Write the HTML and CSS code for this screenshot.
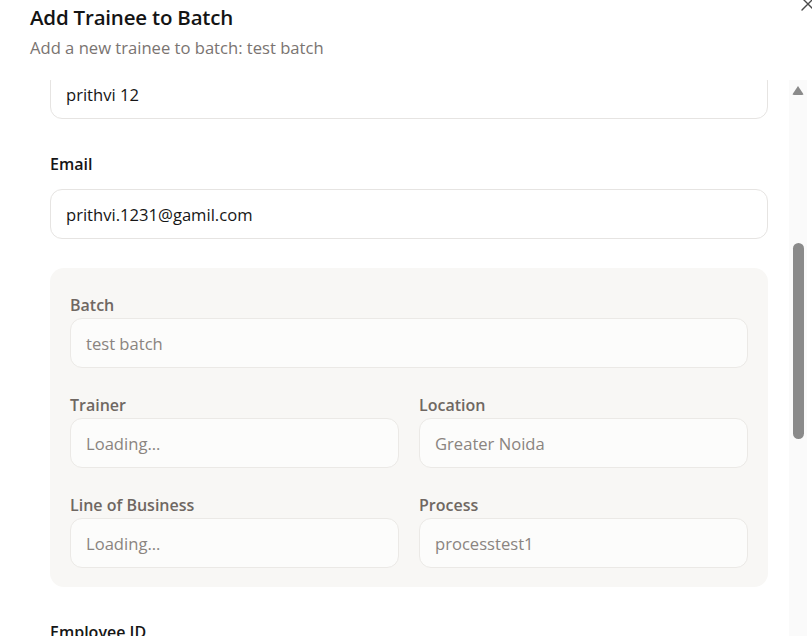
FILE: index.html
```html
<!DOCTYPE html>
<html lang="en">
<head>
<meta charset="utf-8">
<title>Add Trainee to Batch</title>
<link rel="stylesheet" href="styles.css">
</head>
<body>
<div class="dialog">
  <button class="close" aria-label="Close">
    <svg width="16" height="16" viewBox="0 0 16 16"><path d="M2 2 L14 14 M14 2 L2 14" stroke="#4a4a4a" stroke-width="1.4" fill="none" stroke-linecap="round"/></svg>
  </button>
  <header class="header">
    <h2 class="title">Add Trainee to Batch</h2>
    <p class="subtitle">Add a new trainee to batch: test batch</p>
  </header>
  <div class="body">
    <div class="viewport">
      <form class="form">
        <div class="field">
          <div class="input">prithvi 12</div>
        </div>
        <div class="field">
          <label class="label">Email</label>
          <div class="input">prithvi.1231@gamil.com</div>
        </div>
        <div class="panel">
          <div class="pfield">
            <label class="plabel">Batch</label>
            <div class="pinput">test batch</div>
          </div>
          <div class="prow">
            <div class="pfield">
              <label class="plabel">Trainer</label>
              <div class="pinput">Loading...</div>
            </div>
            <div class="pfield">
              <label class="plabel">Location</label>
              <div class="pinput">Greater Noida</div>
            </div>
          </div>
          <div class="prow">
            <div class="pfield">
              <label class="plabel">Line of Business</label>
              <div class="pinput">Loading...</div>
            </div>
            <div class="pfield">
              <label class="plabel">Process</label>
              <div class="pinput">processtest1</div>
            </div>
          </div>
        </div>
        <div class="field">
          <label class="label">Employee ID</label>
          <div class="input"></div>
        </div>
      </form>
    </div>
    <div class="scrollbar">
      <div class="arrow"></div>
      <div class="thumb"></div>
    </div>
  </div>
</div>
</body>
</html>
```
FILE: styles.css
```css
* { box-sizing: border-box; }
html, body { margin: 0; padding: 0; background: #fff; }
body {
  font-family: "Open Sans", "Noto Sans", sans-serif;
  color: #111;
  width: 812px;
  height: 636px;
  overflow: hidden;
}
.dialog {
  position: relative;
  width: 812px;
  height: 636px;
  display: flex;
  flex-direction: column;
}
.close {
  position: absolute;
  top: -4px;
  left: 800px;
  width: 16px;
  height: 16px;
  padding: 0;
  border: 0;
  background: transparent;
}
.close svg { display: block; }
.header {
  height: 80px;
  padding: 3px 0 0 30px;
  flex: none;
}
.title {
  margin: 0;
  font-size: 20.5px;
  line-height: 28px;
  font-weight: 600;
  color: #141414;
  letter-spacing: -0.2px;
}
.subtitle {
  margin: 5px 0 0;
  font-size: 16.6px;
  line-height: 24px;
  color: #7a7471;
}
.body {
  flex: 1;
  display: flex;
  min-height: 0;
}
.viewport {
  flex: 1;
  overflow: hidden;
  padding: 0 21px 0 50px;
}
.form {
  margin-top: -11px;
  display: flex;
  flex-direction: column;
  gap: 29px;
}
.field { display: flex; flex-direction: column; }
.label {
  font-size: 16px;
  line-height: 28px;
  padding-top: 2px;
  font-weight: 600;
  color: #161616;
  margin-bottom: 11px;
}
.input {
  height: 50px;
  border: 1px solid #e6e4e2;
  border-radius: 12px;
  padding: 1px 15px 0;
  display: flex;
  align-items: center;
  font-size: 16.6px;
  color: #161616;
  background: #fff;
}
.panel {
  background: #f8f7f5;
  border-radius: 14px;
  padding: 22px 20px 19px;
  display: flex;
  flex-direction: column;
  gap: 22px;
}
.prow {
  display: grid;
  grid-template-columns: 1fr 1fr;
  gap: 20px;
}
.pfield { display: flex; flex-direction: column; }
.plabel {
  font-size: 16px;
  line-height: 28px;
  padding-top: 1px;
  margin-bottom: -1px;
  font-weight: 600;
  color: #6f6762;
}
.pinput {
  height: 50px;
  border: 1px solid #ebe9e6;
  border-radius: 12px;
  padding: 1px 15px 0;
  display: flex;
  align-items: center;
  font-size: 16.6px;
  color: #8a8480;
  background: #fcfcfb;
}
.scrollbar {
  flex: none;
  width: 18px;
  margin-right: 5px;
  background: #fafafa;
  display: flex;
  flex-direction: column;
  align-items: center;
  padding-top: 6px;
}
.arrow {
  width: 0;
  height: 0;
  border-left: 6px solid transparent;
  border-right: 6px solid transparent;
  border-bottom: 9px solid #8a8a8a;
  border-radius: 2px;
}
.thumb {
  margin-top: 148px;
  width: 11px;
  height: 196px;
  background: #8a8a8a;
  border-radius: 6px;
}
```
